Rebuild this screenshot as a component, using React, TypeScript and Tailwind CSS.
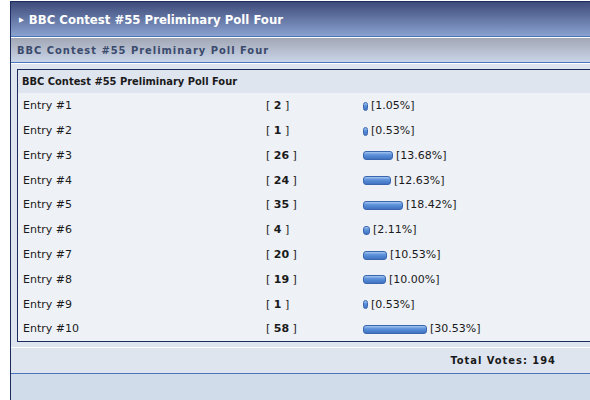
import React from 'react';

interface PollEntry {
  name: string;
  votes: number;
  pct: string;
}

const entries: PollEntry[] = [
  { name: 'Entry #1', votes: 2, pct: '1.05' },
  { name: 'Entry #2', votes: 1, pct: '0.53' },
  { name: 'Entry #3', votes: 26, pct: '13.68' },
  { name: 'Entry #4', votes: 24, pct: '12.63' },
  { name: 'Entry #5', votes: 35, pct: '18.42' },
  { name: 'Entry #6', votes: 4, pct: '2.11' },
  { name: 'Entry #7', votes: 20, pct: '10.53' },
  { name: 'Entry #8', votes: 19, pct: '10.00' },
  { name: 'Entry #9', votes: 1, pct: '0.53' },
  { name: 'Entry #10', votes: 58, pct: '30.53' },
];

const TOTAL_VOTES = 194;

const boldFont = "font-['DejaVu_Sans_Condensed','DejaVu_Sans',Tahoma,sans-serif]";
const bodyFont = "font-['DejaVu_Sans',Verdana,sans-serif]";

const VoteBar: React.FC<{ pct: string }> = ({ pct }) => {
  const width = Math.max(5, Math.round(parseFloat(pct) * 2 + 3));
  return (
    <span
      className="inline-block h-[9px] rounded-[3px] border border-[#3a66b0] bg-[linear-gradient(to_bottom,#a4c6f0_0%,#6396dc_35%,#4f84d0_65%,#4272c0_100%)]"
      style={{ width }}
    />
  );
};

const PollRow: React.FC<{ entry: PollEntry }> = ({ entry }) => (
  <div className={`flex h-[24.8px] items-center pl-[5px] pt-[2px] text-[11px] text-[#1a1a1a] ${bodyFont}`}>
    <div className="w-[243px]">{entry.name}</div>
    <div className="w-[97px]">
      [ <span className="font-bold">{entry.votes}</span> ]
    </div>
    <div className="flex items-center gap-[3px]">
      <VoteBar pct={entry.pct} />
      <span>[{entry.pct}%]</span>
    </div>
  </div>
);

export default function App() {
  return (
    <div className={`h-[400px] w-[590px] overflow-hidden bg-white pl-[10px] pt-[1px] ${boldFont}`}>
      <div className="h-[399px] border-l border-t border-[#1b2b5e] bg-[#d0dcea]">
        {/* forum section title */}
        <div className="flex h-[35px] items-center gap-[5px] border-b border-[#4a74bb] bg-[linear-gradient(to_bottom,#3e4b7a,#8aa2cf)] pl-[8px] pt-[2px] text-[13px] font-bold text-white">
          <span className="text-[7px] leading-none">▶</span>
          <span>BBC Contest #55 Preliminary Poll Four</span>
        </div>
        <div className="h-px bg-white" />

        {/* subheader strip */}
        <div className="flex h-[25px] items-center border-b border-[#4a74bb] bg-[linear-gradient(to_bottom,#a2a7b5,#c9d5e8)] pl-[6px] pt-[2px] text-[11px] font-bold tracking-[1px] text-[#3a4a6c]">
          BBC Contest #55 Preliminary Poll Four
        </div>
        <div className="h-px bg-white" />

        {/* results table */}
        <div className="border-b border-white bg-[#dfe5ef] py-[5px] pl-[6px]">
          <div className="border-y border-l border-[#1b2b5e] bg-[#eef1f6]">
            <div className="flex h-[23px] items-center bg-[#dfe5ef] pl-[4px] pt-[1px] text-[11px] font-bold text-[#1a1a1a]">
              BBC Contest #55 Preliminary Poll Four
            </div>
            {entries.map(e => (
              <PollRow key={e.name} entry={e} />
            ))}
          </div>
        </div>

        <div className="flex h-[26px] items-center justify-end border-b border-[#4a74bb] bg-[#dfe5ef] pr-[34px] pt-[2px] text-[11px] font-bold tracking-[1px] text-[#1a1a1a]">
          Total Votes: {TOTAL_VOTES}
        </div>
      </div>
    </div>
  );
}
